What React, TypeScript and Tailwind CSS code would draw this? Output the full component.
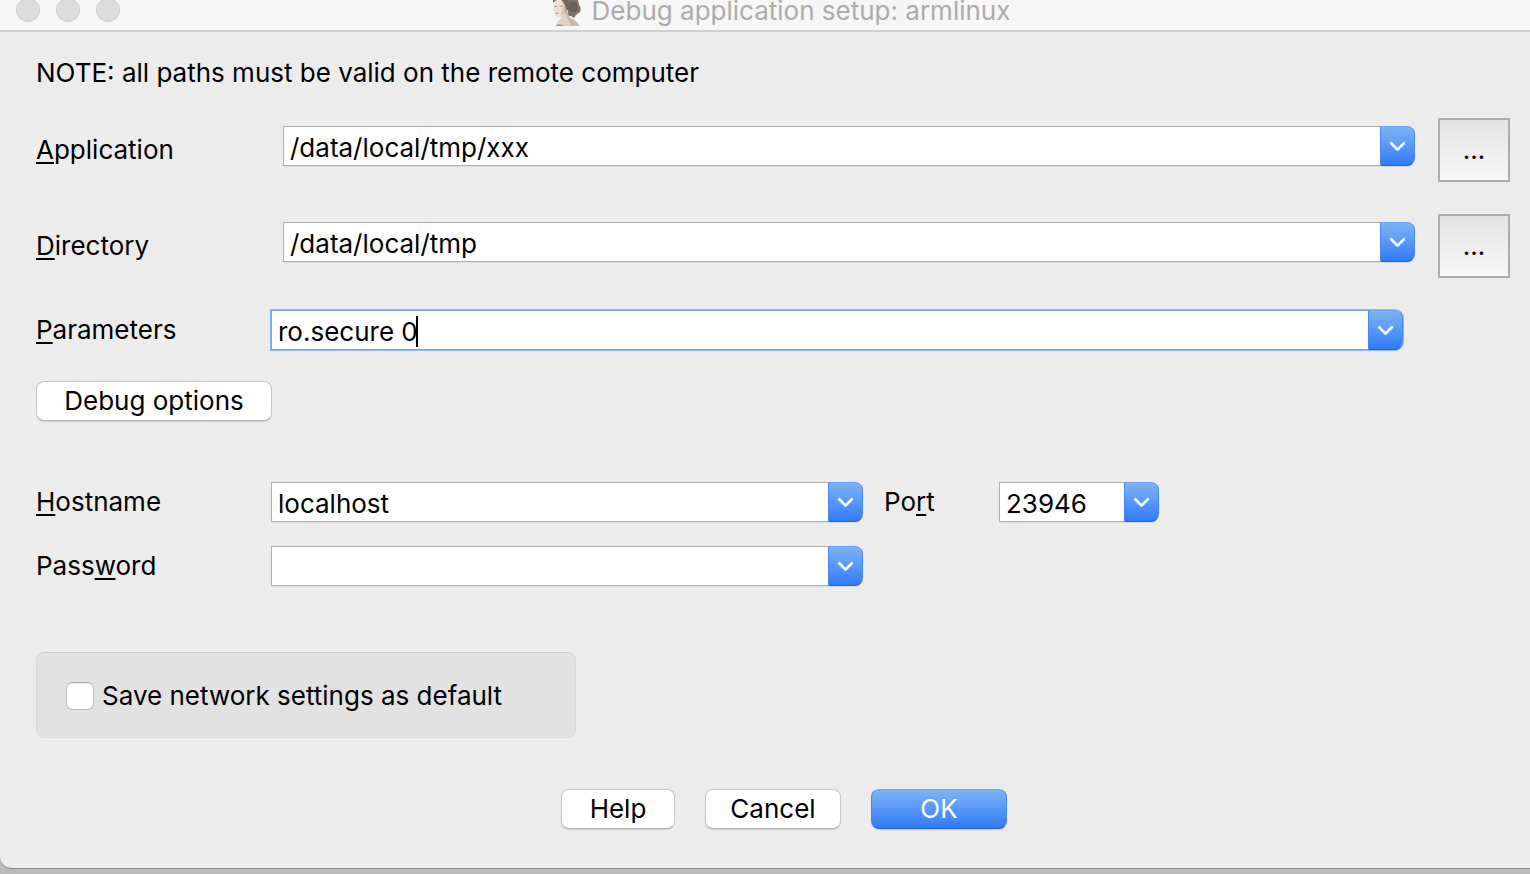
import type { ReactNode } from 'react';

const cx = (...names: (string | false | undefined)[]) => names.filter(Boolean).join(' ');

function Key({ children }: { children: ReactNode }) {
  return (
    <span className="underline decoration-2 underline-offset-3 [text-decoration-skip-ink:none]">{children}</span>
  );
}

type ComboProps = {
  id: string;
  value: string;
  label: string;
  className?: string;
  focused?: boolean;
};

function Combo({ id, value, label, className, focused }: ComboProps) {
  return (
    <div
      className={cx(
        'relative flex h-10 rounded-r-lg',
        focused ? 'shadow-[0_0_0_1px_#8fb6ec]' : 'shadow-[0_1px_1px_rgba(0,0,0,0.08)]',
        className,
      )}
    >
      <input
        id={id}
        type="text"
        defaultValue={value}
        className={cx(
          'h-10 min-w-0 flex-1 border border-r-0 bg-white pt-0.5 pl-1.5 text-black outline-none',
          focused ? 'border-[#7ba5e0] caret-transparent' : 'border-[#b0b0b0]',
        )}
      />
      {focused && <span className="absolute top-1.5 left-[145px] h-[31px] w-0.5 bg-black" />}
      <button
        type="button"
        aria-label={label}
        className="flex h-10 w-[35px] shrink-0 items-center justify-center rounded-r-lg border border-t-[#6ba3f0] border-r-[#4a87ee] border-b-[#2160e8] border-l-[#4a87ee] bg-linear-to-b from-[#7db3f5] to-[#317af8]"
      >
        <svg width="17" height="12" viewBox="0 0 17 12" fill="none" aria-hidden="true">
          <path d="M2.2 3.2 8.5 9.6l6.3-6.4" stroke="#fff" strokeWidth="2.7" strokeLinecap="round" strokeLinejoin="round" />
        </svg>
      </button>
    </div>
  );
}

function Browse({ label }: { label: string }) {
  return (
    <button
      type="button"
      aria-label={label}
      className="flex h-16 w-[72px] shrink-0 items-center justify-center border-2 border-[#adadad] bg-linear-to-b from-[#e3e3e3] to-[#f8f8f8]"
    >
      ...
    </button>
  );
}

function PushButton({ children, className }: { children: ReactNode; className: string }) {
  return (
    <button
      type="button"
      className={cx(
        'flex h-10 items-center justify-center rounded-lg border border-[#c8c8c8] border-b-[#b0b0b0] bg-white shadow-[0_1px_1px_rgba(0,0,0,0.1)]',
        className,
      )}
    >
      {children}
    </button>
  );
}

function Portrait() {
  return (
    <svg width="34" height="32" viewBox="-1 -5 34 32" className="shrink-0" aria-hidden="true">
      <path d="M3-5h19c4 2 6 6 6 10 2 2 2 5 1 7l-4 3-2 3-3-2-5 1-6-4-5-6z" fill="#83736e" />
      <path d="M20 2c4-1 7 1 7 5s-3 6-6 5-4-3-4-5z" fill="#6f605c" />
      <path d="M10 12l7-2c0 4 0 6 3 8 4 2 7 4 8 8H5l2-5c4-2 5-5 3-9z" fill="#e4d1c5" />
      <path d="M15 13l2 0c0 4 1 5 4 6 4 2 6 4 7 7h-8c0-5-5-6-5-13z" fill="#cfb5a7" />
      <path d="M2 3c2-3 7-5 10-3 3 3 4 7 3 11-1 3-3 5-5 6-3 1-5 0-6-3L2 10z" fill="#f0e1d8" />
      <path d="M11 1c4 3 5 8 3 12l-4 4c0-5 2-10 1-16z" fill="#dcc2b5" />
      <path d="M2-3c4-2 9-2 12 0 4 3 5 8 3 12l-2 2C15 6 13 2 10 0 7-1 4 0 2 3z" fill="#75655f" />
      <path d="M14 9c2-1 3 1 2 3l-2 2z" fill="#c9a08f" />
      <path d="M3.500 6.500h2.500M8.500 6.200h2.500" stroke="#a98e85" strokeWidth="1" />
      <path d="M4.500 13.300h3" stroke="#c89a92" strokeWidth="1.200" />
      <path d="M4 26c2-2 5-2 8-1l2 1z" fill="#a89a92" />
    </svg>
  );
}

export default function App() {
  return (
    <div className="flex min-h-screen flex-col bg-[#bcbcbc] pb-[5px] font-['Inter','Liberation_Sans',sans-serif] text-[26px] leading-8 text-black">
      <div className="flex flex-1 flex-col rounded-bl-xl border-b border-[#8c8c8c] bg-[#ececec]">
        <header className="flex h-8 items-center border-b-2 border-[#d0d0d0] bg-[#f6f6f6] pb-2.5 pl-4">
          <div className="flex gap-4">
            <span className="size-6 rounded-full border border-[#cdcdcd] bg-[#dddddd]" />
            <span className="size-6 rounded-full border border-[#cdcdcd] bg-[#dddddd]" />
            <span className="size-6 rounded-full border border-[#cdcdcd] bg-[#dddddd]" />
          </div>
          <div className="flex flex-1 items-center justify-center gap-2 pt-0.5 pr-[90px]">
            <Portrait />
            <h1 className="whitespace-nowrap text-[#acacac]">Debug application setup: armlinux</h1>
          </div>
        </header>

        <form className="flex flex-col pt-[25px] pr-5 pb-[38px] pl-9">
          <p>NOTE: all paths must be valid on the remote computer</p>

          <div className="mt-[29px] flex items-center">
            <label htmlFor="application" className="w-[247px] shrink-0">
              <Key>A</Key>pplication
            </label>
            <Combo id="application" value="/data/local/tmp/xxx" label="Application history" className="mb-2 flex-1" />
            <div className="ml-[23px]">
              <Browse label="Browse for application" />
            </div>
          </div>

          <div className="mt-8 flex items-center">
            <label htmlFor="directory" className="w-[247px] shrink-0">
              <Key>D</Key>irectory
            </label>
            <Combo id="directory" value="/data/local/tmp" label="Directory history" className="mb-2 flex-1" />
            <div className="ml-[23px]">
              <Browse label="Browse for directory" />
            </div>
          </div>

          <div className="mt-8 flex items-center pr-[107px]">
            <label htmlFor="parameters" className="w-[235px] shrink-0">
              <Key>P</Key>arameters
            </label>
            <Combo id="parameters" value="ro.secure 0" label="Parameters history" className="flex-1" focused />
          </div>

          <PushButton className="mt-[31px] w-[236px]">Debug options</PushButton>

          <div className="mt-[61px] flex items-center">
            <label htmlFor="hostname" className="w-[235px] shrink-0">
              <Key>H</Key>ostname
            </label>
            <Combo id="hostname" value="localhost" label="Hostname history" className="w-[592px]" />
            <label htmlFor="port" className="ml-[21px] w-[115px] shrink-0">
              Po<Key>r</Key>t
            </label>
            <Combo id="port" value="23946" label="Port history" className="w-40" />
          </div>

          <div className="mt-6 flex items-center">
            <label htmlFor="password" className="w-[235px] shrink-0">
              Pass<Key>w</Key>ord
            </label>
            <Combo id="password" value="" label="Password history" className="w-[592px]" />
          </div>

          <div className="mt-[66px] flex h-[86px] w-[540px] items-center rounded-lg border border-[#dadada] border-t-[#d0d0d0] bg-[#e2e2e2] pt-0.5 pl-[29px]">
            <label className="flex items-center gap-2">
              <input
                type="checkbox"
                className="size-7 appearance-none rounded-md border border-[#bdbdbd] border-t-[#a8a8a8] bg-white shadow-[inset_0_1px_2px_rgba(0,0,0,0.1)]"
              />
              Save network settings as default
            </label>
          </div>

          <div className="mt-[51px] flex justify-center gap-[30px] pl-[22px]">
            <PushButton className="w-[114px]">Help</PushButton>
            <PushButton className="w-[136px]">Cancel</PushButton>
            <button
              type="submit"
              className="flex h-10 w-[136px] items-center justify-center rounded-lg border border-t-[#6ba3f0] border-r-[#4a87ee] border-b-[#2160e8] border-l-[#4a87ee] bg-linear-to-b from-[#7db3f5] to-[#317af8] text-white shadow-[0_1px_1px_rgba(0,0,0,0.1)]"
            >
              OK
            </button>
          </div>
        </form>
      </div>
    </div>
  );
}
